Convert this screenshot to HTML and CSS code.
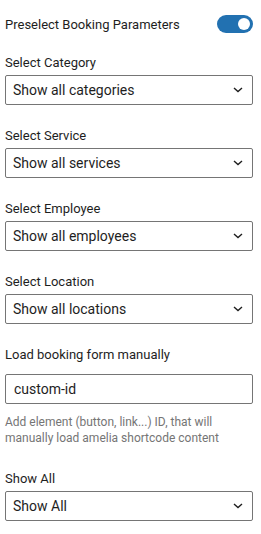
FILE: index.html
```html
<!DOCTYPE html>
<html>
<head>
<meta charset="utf-8">
<link rel="stylesheet" href="styles.css">
</head>
<body>
<div class="panel">
  <div class="toggle-row">
    <span class="toggle-label">Preselect Booking Parameters</span>
    <span class="toggle"><span class="thumb"></span></span>
  </div>

  <div class="field">
    <label class="label">Select Category</label>
    <div class="select"><span>Show all categories</span><svg class="chev" width="10" height="6" viewBox="0 0 10 6"><path d="M1 1l4 3.5L9 1" fill="none" stroke="#1e1e1e" stroke-width="1.4"/></svg></div>
  </div>

  <div class="field">
    <label class="label">Select Service</label>
    <div class="select"><span>Show all services</span><svg class="chev" width="10" height="6" viewBox="0 0 10 6"><path d="M1 1l4 3.5L9 1" fill="none" stroke="#1e1e1e" stroke-width="1.4"/></svg></div>
  </div>

  <div class="field">
    <label class="label">Select Employee</label>
    <div class="select"><span>Show all employees</span><svg class="chev" width="10" height="6" viewBox="0 0 10 6"><path d="M1 1l4 3.5L9 1" fill="none" stroke="#1e1e1e" stroke-width="1.4"/></svg></div>
  </div>

  <div class="field">
    <label class="label">Select Location</label>
    <div class="select"><span>Show all locations</span><svg class="chev" width="10" height="6" viewBox="0 0 10 6"><path d="M1 1l4 3.5L9 1" fill="none" stroke="#1e1e1e" stroke-width="1.4"/></svg></div>
  </div>

  <div class="field field-text">
    <label class="label label-text">Load booking form manually</label>
    <div class="input">custom-id</div>
    <p class="help">Add element (button, link...) ID, that will manually load amelia shortcode content</p>
  </div>

  <div class="field field-last">
    <label class="label">Show All</label>
    <div class="select"><span>Show All</span><svg class="chev" width="10" height="6" viewBox="0 0 10 6"><path d="M1 1l4 3.5L9 1" fill="none" stroke="#1e1e1e" stroke-width="1.4"/></svg></div>
  </div>
</div>
</body>
</html>
```

FILE: styles.css
```css
html, body {
  margin: 0;
  padding: 0;
  background: #ffffff;
}
body {
  font-family: Roboto, "Liberation Sans", Arial, sans-serif;
  color: #1e1e1e;
}
.panel {
  padding: 15px 8px 0 5px;
}
.toggle-row {
  display: flex;
  align-items: center;
  justify-content: space-between;
  height: 18px;
}
.toggle-label {
  font-size: 13px;
}
.toggle {
  display: flex;
  align-items: center;
  justify-content: flex-end;
  width: 36px;
  height: 18px;
  border-radius: 9px;
  background: #2271b1;
  box-sizing: border-box;
  padding-right: 3px;
}
.thumb {
  width: 12px;
  height: 12px;
  border-radius: 50%;
  background: #fff;
}
.field {
  display: flex;
  flex-direction: column;
  margin-top: 21px;
}
.field + .field {
  margin-top: 22px;
}
.label {
  font-size: 13px;
  line-height: 18px;
  margin-bottom: 3px;
}
.select {
  display: flex;
  align-items: center;
  justify-content: space-between;
  height: 30px;
  box-sizing: border-box;
  border: 1px solid #757575;
  border-radius: 2px;
  padding: 0 9px 0 7px;
  font-size: 14px;
}
.chev {
  display: block;
}
.label-text {
  margin-bottom: 10px;
}
.input {
  display: flex;
  align-items: center;
  height: 30px;
  box-sizing: border-box;
  border: 1px solid #757575;
  border-radius: 2px;
  padding: 0 8px;
  font-size: 14px;
}
.help {
  margin: 10px 0 0;
  font-size: 12px;
  line-height: 16px;
  color: #757575;
}
.field.field-last {
  margin-top: 24px;
}
```
